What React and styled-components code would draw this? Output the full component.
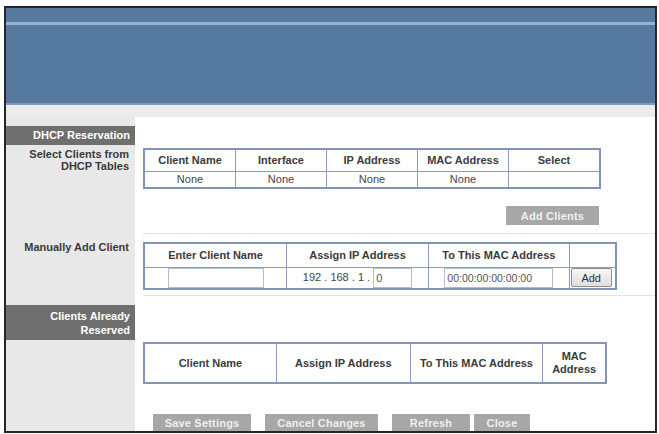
import React from 'react'
import styled, { createGlobalStyle } from 'styled-components'

const GlobalStyle = createGlobalStyle`
  body {
    margin: 0;
    background: #fff;
    font-family: "Liberation Sans", Arial, sans-serif;
  }
`;

const dhcpCols = ['Client Name', 'Interface', 'IP Address', 'MAC Address', 'Select'];
const reservedCols = [
  { label: 'Client Name', w: 28.9 },
  { label: 'Assign IP Address', w: 29.3 },
  { label: 'To This MAC Address', w: 29.1 },
  { label: 'MAC Address', w: 12.7 },
];

export default function App() {
  return (
    <>
      <GlobalStyle />
      <Frame>
        <Banner />
        <Band />

        <Section>
          <Side>
            <SideHead $h={19} $mt={9}>DHCP Reservation</SideHead>
          </Side>
          <Main />
        </Section>

        <Section>
          <Side>
            <SideLabel $pt={2}>Select Clients from<br />DHCP Tables</SideLabel>
          </Side>
          <Main $pt={2}>
            <Grid $w={458}>
              <tbody>
                <Row $h={22}>
                  {dhcpCols.map(c => <Th key={c} $w={20}>{c}</Th>)}
                </Row>
                <Row $h={17}>
                  <Td>None</Td>
                  <Td>None</Td>
                  <Td>None</Td>
                  <Td>None</Td>
                  <Td></Td>
                </Row>
              </tbody>
            </Grid>
            <ButtonRow $mt={17} $pl={363}>
              <FlatButton $w={93}>Add Clients</FlatButton>
            </ButtonRow>
            <Divider $mt={8} />
          </Main>
        </Section>

        <Section>
          <Side>
            <SideLabel $pt={7}>Manually Add Client</SideLabel>
          </Side>
          <Main $pt={8}>
            <Grid $w={474}>
              <tbody>
                <Row $h={24}>
                  <Th $w={30.2}>Enter Client Name</Th>
                  <Th $w={30.2}>Assign IP Address</Th>
                  <Th $w={29.9}>To This MAC Address</Th>
                  <Th $w={9.7}></Th>
                </Row>
                <Row $h={22}>
                  <Td><Field $w={96} /></Td>
                  <Td>192 . 168 . 1 . <Field $w={39} defaultValue="0" /></Td>
                  <Td><Field $w={109} $small defaultValue="00:00:00:00:00:00" /></Td>
                  <Td $left><AddButton>Add</AddButton></Td>
                </Row>
              </tbody>
            </Grid>
            <Divider $mt={5} />
          </Main>
        </Section>

        <Section>
          <Side>
            <SideHead $h={35} $mt={9} $mb={2} $two>Clients Already<br />Reserved</SideHead>
          </Side>
          <Main />
        </Section>

        <Section $grow>
          <Side />
          <Main>
            <Grid $w={464}>
              <tbody>
                <Row $h={40}>
                  {reservedCols.map(c => <Th key={c.label} $w={c.w} $wrap>{c.label}</Th>)}
                </Row>
              </tbody>
            </Grid>
            <ButtonRow $mt={30} $pl={10}>
              <FlatButton $w={98} $h={18}>Save Settings</FlatButton>
              <FlatButton $w={113} $h={18} $ml={14}>Cancel Changes</FlatButton>
              <FlatButton $w={78} $h={18} $ml={14}>Refresh</FlatButton>
              <FlatButton $w={56} $h={18} $ml={4}>Close</FlatButton>
            </ButtonRow>
          </Main>
        </Section>
      </Frame>
    </>
  )
}

const Frame = styled.div`
  margin: 6px 0 0 4px;
  width: 649px;
  height: 423px;
  border: 2px solid #262626;
  display: flex;
  flex-direction: column;
  overflow: hidden;
  background: #e8e8e8;
`;

const Banner = styled.div`
  height: 97px;
  flex: none;
  background: linear-gradient(#55799f 0 14px, #93b1d3 14px 17px, #55799f 17px 95px, #7f9cbc 95px);
`;

const Band = styled.div`
  height: 12px;
  flex: none;
  background: #ececec;
`;

const Section = styled.div`
  display: grid;
  grid-template-columns: 129px 1fr;
  flex: ${p => (p.$grow ? '1' : 'none')};
`;

const Side = styled.div`
  background: #e8e8e8;
`;

const SideHead = styled.div`
  margin: ${p => p.$mt}px 0 ${p => p.$mb || 0}px;
  height: ${p => p.$h}px;
  box-sizing: border-box;
  background: #6f6f6f;
  color: #fff;
  font-size: 11px;
  font-weight: bold;
  text-align: right;
  padding: ${p => (p.$two ? '4px 5px 0 0' : '0 5px 0 0')};
  line-height: ${p => (p.$two ? '14px' : `${p.$h}px`)};
`;

const SideLabel = styled.div`
  padding: ${p => p.$pt}px 6px 0 0;
  font-size: 11px;
  font-weight: bold;
  line-height: 12px;
  color: #3a3a3a;
  text-align: right;
`;

const Main = styled.div`
  background: #fff;
  padding: ${p => p.$pt || 0}px 0 0 8px;
  min-height: 29px;
`;

const Grid = styled.table`
  width: ${p => p.$w}px;
  table-layout: fixed;
  border-collapse: collapse;
  border: 2px solid #8094b9;
`;

const Row = styled.tr`
  height: ${p => p.$h}px;
`;

const Th = styled.th`
  width: ${p => p.$w}%;
  padding: 0 ${p => (p.$wrap ? '4px' : '0')};
  border: 1px solid #8c9ec0;
  font-size: 11px;
  font-weight: bold;
  line-height: 13px;
  color: #3b3b3b;
  text-align: center;
  white-space: ${p => (p.$wrap ? 'normal' : 'nowrap')};
`;

const Td = styled.td`
  padding: 0 ${p => (p.$left ? '1px' : '0')};
  border: 1px solid #8c9ec0;
  border-top-color: #b7c3da;
  font-size: 11px;
  color: #444;
  text-align: ${p => (p.$left ? 'left' : 'center')};
  white-space: nowrap;
`;

const Field = styled.input`
  width: ${p => p.$w}px;
  height: 20px;
  box-sizing: border-box;
  border: 1px solid #b3bccb;
  padding: 0 2px;
  font-family: "Liberation Sans", Arial, sans-serif;
  font-size: ${p => (p.$small ? '10.5px' : '11px')};
  color: #555;
  vertical-align: middle;
  outline: none;
`;

const AddButton = styled.button`
  width: 41px;
  height: 19px;
  padding: 0;
  border: 1px solid #8d8d8d;
  border-radius: 2px;
  background: linear-gradient(#f7f7f7, #dedede);
  font-family: "Liberation Sans", Arial, sans-serif;
  font-size: 11px;
  color: #333;
  vertical-align: middle;
`;

const ButtonRow = styled.div`
  display: flex;
  margin-top: ${p => p.$mt}px;
  padding-left: ${p => p.$pl}px;
`;

const FlatButton = styled.button`
  width: ${p => p.$w}px;
  height: ${p => p.$h || 19}px;
  margin-left: ${p => p.$ml || 0}px;
  padding: 0;
  border: none;
  background: #a7a7a7;
  color: #efefef;
  font-family: "Liberation Sans", Arial, sans-serif;
  font-size: 11px;
  font-weight: bold;
  letter-spacing: 0.2px;
`;

const Divider = styled.div`
  margin-top: ${p => p.$mt}px;
  height: 1px;
  background: #e3e3e3;
`;
